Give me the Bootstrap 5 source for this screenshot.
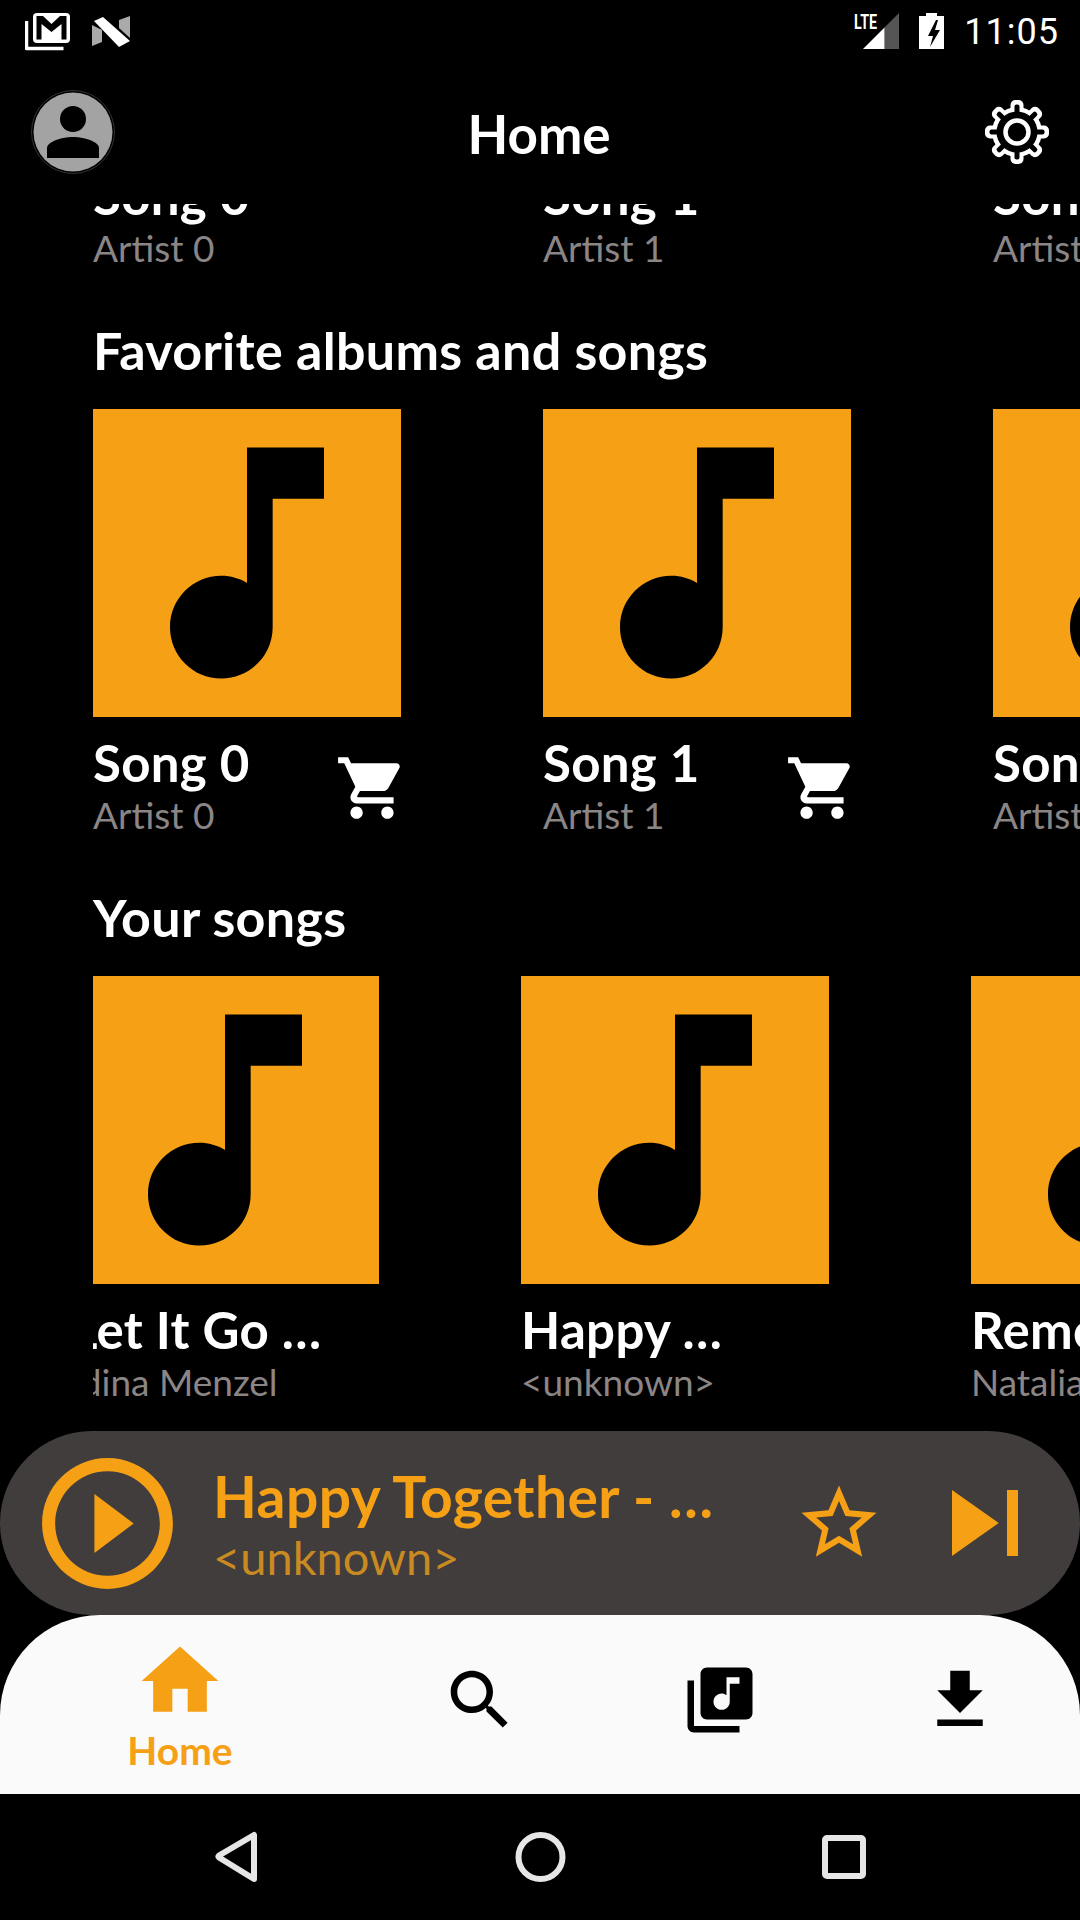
<!DOCTYPE html>
<html lang="en">
<head>
<meta charset="utf-8">
<title>Home</title>
<link rel="stylesheet" href="https://cdn.jsdelivr.net/npm/bootstrap@5.3.0/dist/css/bootstrap.min.css">
<style>
html,body{margin:0;background:#000;}
body{width:1080px;height:1920px;overflow:hidden;font-family:"Lato","Liberation Sans",sans-serif;color:#fff;}
svg{display:block;flex:none;}
.statusrow{height:60px;padding-left:25px;padding-right:21px;}
.clocktxt{font-family:"Roboto","Liberation Sans",sans-serif;font-size:36px;line-height:60px;letter-spacing:1px;margin-left:19px;padding-top:4px;}
.statgap{margin-left:19px;}
.statgap-n{margin-left:21px;}
.apphead{height:144px;}
.headside{flex:1 1 0;}
.avatarpad{margin-left:31px;}
.gearpad{margin-right:23px;}
.headtitle{font-size:53px;line-height:60px;font-weight:700;margin-top:4px;margin-right:2px;}
.scrollarea{height:1227px;}
.scrollinner{margin-top:-37px;}
.shelfclip{margin-left:93px;}
.shelfrow{gap:142px;width:2000px;}
.shelfshift{margin-left:-22px;}
.shelfitem{width:308px;flex:none;}
.sectionhead{font-size:52px;line-height:58px;font-weight:700;letter-spacing:.3px;margin:52px 0 30px 93px;}
.cover{width:308px;height:308px;background:#f6a015;}
.songmeta{margin-top:17px;width:316px;}
.songname{font-size:51px;line-height:58px;font-weight:700;letter-spacing:.3px;}
.songartist{font-size:37px;line-height:43px;margin-top:1px;color:#8b8585;}
.carticon{margin-top:17px;}
.playerbar{height:184px;background:#413d3d;padding-left:29px;padding-right:29px;}
.playertext{margin-left:27px;}
.playertitle{font-size:57px;line-height:67px;font-weight:700;letter-spacing:.4px;color:#f6a015;}
.playersub{font-size:47px;line-height:53px;margin-top:1px;color:#c98a22;}
.playerstar{margin-right:35px;}
.bottomnav{height:179px;background:#fafafa;border-radius:100px 100px 0 0;padding-left:60px;}
.navcell{width:240px;padding-top:46px;}
.navcell-home{padding-top:20px;}
.navgap{margin-left:60px;}
.navlabel{font-size:39px;line-height:46px;font-weight:700;color:#f6a015;}
.sysnav{height:126px;}
</style>
</head>
<body>
<div class="d-flex flex-column">

  <div class="statusrow d-flex align-items-center justify-content-between">
    <div class="d-flex align-items-center">
      <svg width="46" height="60" viewBox="25 0 46 60"><path d="M26.500 21v27.500h37" fill="none" stroke="#fff" stroke-width="3.500" stroke-linejoin="round"/><rect x="33" y="13" width="37" height="30" rx="4" fill="#fff"/><path d="M36.500 16H43l8.500 8 8.500-8h6.500v23.500h-5V24l-10 8-10-8v15.500h-5z" fill="#000"/></svg>
      <svg class="statgap-n" width="38" height="60" viewBox="92 0 38 60"><path d="M92 25v21l10-4V30z" fill="#aaa"/><path d="M119 20l11-4v22l-11-10z" fill="#aaa"/><path d="M94 21l9-4 27 24-11 6z" fill="#fff"/></svg>
    </div>
    <div class="d-flex align-items-center">
      <svg width="46" height="60" viewBox="855 0 46 60"><path d="M885.500 27.500L900 13v36h-14.500z" fill="#555"/><path d="M864 49l21.500-21.500V49z" fill="#fff"/><text x="855" y="29" font-family="Roboto,Liberation Sans,sans-serif" font-weight="700" font-size="20" fill="#fff" textLength="23" lengthAdjust="spacingAndGlyphs">LTE</text></svg>
      <svg class="statgap" width="26" height="60" viewBox="922 0 26 60"><path d="M929 16v-3h11v3h7v33h-25V16z" fill="#fff"/><path d="M939 20l-8 16h5l-3 11 10-17h-5l3-10z" fill="#000"/></svg>
      <span class="clocktxt">11:05</span>
    </div>
  </div>

  <div class="apphead d-flex align-items-center">
    <div class="headside d-flex">
      <svg class="avatarpad" width="84" height="84" viewBox="0 0 84 84"><circle cx="42" cy="42" r="41.500" fill="#000" stroke="#333" stroke-width="1"/><circle cx="42" cy="42" r="39.500" fill="#a3a3a3"/><circle cx="42" cy="29" r="13" fill="#000"/><path d="M16 68V58c0-6 14-11 26-11s26 5 26 11v10z" fill="#000"/></svg>
    </div>
    <div class="headtitle">Home</div>
    <div class="headside d-flex justify-content-end">
      <svg class="gearpad" width="80" height="80" viewBox="-40 -40 80 80">
        <g fill="#fff">
          <circle r="25"/>
          <rect x="-6.500" y="-32" width="13" height="14" rx="5"/>
          <rect x="-6.500" y="-32" width="13" height="14" rx="5" transform="rotate(45)"/>
          <rect x="-6.500" y="-32" width="13" height="14" rx="5" transform="rotate(90)"/>
          <rect x="-6.500" y="-32" width="13" height="14" rx="5" transform="rotate(135)"/>
          <rect x="-6.500" y="-32" width="13" height="14" rx="5" transform="rotate(180)"/>
          <rect x="-6.500" y="-32" width="13" height="14" rx="5" transform="rotate(225)"/>
          <rect x="-6.500" y="-32" width="13" height="14" rx="5" transform="rotate(270)"/>
          <rect x="-6.500" y="-32" width="13" height="14" rx="5" transform="rotate(315)"/>
        </g>
        <g fill="#000">
          <circle r="20.500"/>
          <rect x="-2.500" y="-27.500" width="5" height="12" rx="2"/>
          <rect x="-2.500" y="-27.500" width="5" height="12" rx="2" transform="rotate(45)"/>
          <rect x="-2.500" y="-27.500" width="5" height="12" rx="2" transform="rotate(90)"/>
          <rect x="-2.500" y="-27.500" width="5" height="12" rx="2" transform="rotate(135)"/>
          <rect x="-2.500" y="-27.500" width="5" height="12" rx="2" transform="rotate(180)"/>
          <rect x="-2.500" y="-27.500" width="5" height="12" rx="2" transform="rotate(225)"/>
          <rect x="-2.500" y="-27.500" width="5" height="12" rx="2" transform="rotate(270)"/>
          <rect x="-2.500" y="-27.500" width="5" height="12" rx="2" transform="rotate(315)"/>
        </g>
        <circle r="11.500" fill="none" stroke="#fff" stroke-width="4.500"/>
      </svg>
    </div>
  </div>

  <div class="scrollarea overflow-hidden">
    <div class="scrollinner">
      <div class="shelfclip overflow-hidden">
        <div class="shelfrow d-flex">
          <div class="shelfitem text-nowrap"><div class="songname">Song 0</div><div class="songartist">Artist 0</div></div>
          <div class="shelfitem text-nowrap"><div class="songname">Song 1</div><div class="songartist">Artist 1</div></div>
          <div class="shelfitem text-nowrap"><div class="songname">Song 2</div><div class="songartist">Artist 2</div></div>
        </div>
      </div>

      <div class="sectionhead">Favorite albums and songs</div>
      <div class="shelfclip overflow-hidden">
        <div class="shelfrow d-flex">
          <div class="shelfitem">
            <div class="cover"><svg width="308" height="308" viewBox="0 0 24 24"><path d="M12 3v10.550c-.59-.34-1.270-.55-2-.55-2.210 0-4 1.790-4 4s1.790 4 4 4 4-1.790 4-4V7h4V3h-6z"/></svg></div>
            <div class="songmeta d-flex justify-content-between text-nowrap">
              <div><div class="songname">Song 0</div><div class="songartist">Artist 0</div></div>
              <svg class="carticon" width="74" height="74" viewBox="0 0 24 24" fill="#fff"><path d="M7 18c-1.100 0-1.990.9-1.990 2S5.900 22 7 22s2-.9 2-2-.9-2-2-2zM1 2v2h2l3.600 7.590-1.350 2.450c-.16.28-.25.61-.25.96 0 1.100.9 2 2 2h12v-2H7.420c-.14 0-.25-.11-.25-.25l.03-.12.9-1.630h7.450c.75 0 1.410-.41 1.750-1.030l3.580-6.490c.08-.14.12-.31.12-.48 0-.55-.45-1-1-1H5.210l-.94-2H1zm16 16c-1.100 0-1.990.9-1.990 2s.89 2 1.990 2 2-.9 2-2-.9-2-2-2z"/></svg>
            </div>
          </div>
          <div class="shelfitem">
            <div class="cover"><svg width="308" height="308" viewBox="0 0 24 24"><path d="M12 3v10.550c-.59-.34-1.270-.55-2-.55-2.210 0-4 1.790-4 4s1.790 4 4 4 4-1.790 4-4V7h4V3h-6z"/></svg></div>
            <div class="songmeta d-flex justify-content-between text-nowrap">
              <div><div class="songname">Song 1</div><div class="songartist">Artist 1</div></div>
              <svg class="carticon" width="74" height="74" viewBox="0 0 24 24" fill="#fff"><path d="M7 18c-1.100 0-1.990.9-1.990 2S5.900 22 7 22s2-.9 2-2-.9-2-2-2zM1 2v2h2l3.600 7.590-1.350 2.450c-.16.28-.25.61-.25.96 0 1.100.9 2 2 2h12v-2H7.420c-.14 0-.25-.11-.25-.25l.03-.12.9-1.630h7.450c.75 0 1.410-.41 1.750-1.030l3.580-6.490c.08-.14.12-.31.12-.48 0-.55-.45-1-1-1H5.210l-.94-2H1zm16 16c-1.100 0-1.990.9-1.990 2s.89 2 1.990 2 2-.9 2-2-.9-2-2-2z"/></svg>
            </div>
          </div>
          <div class="shelfitem">
            <div class="cover"><svg width="308" height="308" viewBox="0 0 24 24"><path d="M12 3v10.550c-.59-.34-1.270-.55-2-.55-2.210 0-4 1.790-4 4s1.790 4 4 4 4-1.790 4-4V7h4V3h-6z"/></svg></div>
            <div class="songmeta text-nowrap"><div class="songname">Song 2</div><div class="songartist">Artist 2</div></div>
          </div>
        </div>
      </div>

      <div class="sectionhead">Your songs</div>
      <div class="shelfclip overflow-hidden">
        <div class="shelfrow shelfshift d-flex">
          <div class="shelfitem">
            <div class="cover"><svg width="308" height="308" viewBox="0 0 24 24"><path d="M12 3v10.550c-.59-.34-1.270-.55-2-.55-2.210 0-4 1.790-4 4s1.790 4 4 4 4-1.790 4-4V7h4V3h-6z"/></svg></div>
            <div class="songmeta text-nowrap"><div class="songname">Let It Go …</div><div class="songartist">Idina Menzel</div></div>
          </div>
          <div class="shelfitem">
            <div class="cover"><svg width="308" height="308" viewBox="0 0 24 24"><path d="M12 3v10.550c-.59-.34-1.270-.55-2-.55-2.210 0-4 1.790-4 4s1.790 4 4 4 4-1.790 4-4V7h4V3h-6z"/></svg></div>
            <div class="songmeta text-nowrap"><div class="songname">Happy …</div><div class="songartist">&lt;unknown&gt;</div></div>
          </div>
          <div class="shelfitem">
            <div class="cover"><svg width="308" height="308" viewBox="0 0 24 24"><path d="M12 3v10.550c-.59-.34-1.270-.55-2-.55-2.210 0-4 1.790-4 4s1.790 4 4 4 4-1.790 4-4V7h4V3h-6z"/></svg></div>
            <div class="songmeta text-nowrap"><div class="songname">Remember Me</div><div class="songartist">Natalia Lafourcade</div></div>
          </div>
        </div>
      </div>
    </div>
  </div>

  <div class="playerbar rounded-pill d-flex align-items-center">
    <svg width="157" height="157" viewBox="0 0 24 24" fill="#f6a015"><path d="M10 16.500l6-4.500-6-4.500v9zM12 2C6.480 2 2 6.480 2 12s4.480 10 10 10 10-4.480 10-10S17.520 2 12 2zm0 18c-4.410 0-8-3.590-8-8s3.590-8 8-8 8 3.590 8 8-3.590 8-8 8z"/></svg>
    <div class="playertext text-nowrap">
      <div class="playertitle">Happy Together - …</div>
      <div class="playersub">&lt;unknown&gt;</div>
    </div>
    <svg class="playerstar ms-auto" width="90" height="90" viewBox="0 0 24 24" fill="#f6a015"><path d="M22 9.240l-7.190-.62L12 2 9.190 8.630 2 9.240l5.460 4.730L5.820 21 12 17.270 18.180 21l-1.630-7.030L22 9.240zM12 15.400l-3.760 2.270 1-4.280-3.320-2.880 4.380-.38L12 6.100l1.710 4.040 4.380.38-3.320 2.880 1 4.280L12 15.400z"/></svg>
    <svg width="132" height="132" viewBox="0 0 24 24" fill="#f6a015"><path d="M6 18l8.500-6L6 6v12zM16 6v12h2V6h-2z"/></svg>
  </div>

  <div class="bottomnav d-flex">
    <div class="navcell navcell-home d-flex flex-column align-items-center">
      <svg width="92" height="92" viewBox="0 0 24 24" fill="#f6a015"><path d="M10 20v-6h4v6h5v-8h3L12 3 2 12h3v8z"/></svg>
      <div class="navlabel">Home</div>
    </div>
    <div class="navcell navgap d-flex flex-column align-items-center">
      <svg width="78" height="78" viewBox="0 0 24 24" fill="#000"><path d="M15.500 14h-.79l-.28-.27C15.410 12.590 16 11.110 16 9.500 16 5.910 13.090 3 9.500 3S3 5.910 3 9.500 5.910 16 9.500 16c1.610 0 3.090-.59 4.230-1.570l.27.28v.79l5 4.990L20.490 19l-4.990-5zm-6 0C7.010 14 5 11.990 5 9.500S7.010 5 9.500 5 14 7.010 14 9.500 11.990 14 9.500 14z"/></svg>
    </div>
    <div class="navcell d-flex flex-column align-items-center">
      <svg width="78" height="78" viewBox="0 0 24 24" fill="#000"><path d="M20 2H8c-1.100 0-2 .9-2 2v12c0 1.100.9 2 2 2h12c1.100 0 2-.9 2-2V4c0-1.100-.9-2-2-2zm-2 5h-3v5.500c0 1.380-1.120 2.500-2.500 2.500S10 13.880 10 12.500s1.120-2.500 2.500-2.500c.57 0 1.080.19 1.500.52V5h4v2zM4 6H2v14c0 1.100.9 2 2 2h14v-2H4V6z"/></svg>
    </div>
    <div class="navcell d-flex flex-column align-items-center">
      <svg width="78" height="78" viewBox="0 0 24 24" fill="#000"><path d="M19 9h-4V3H9v6H5l7 7 7-7zM5 18v2h14v-2H5z"/></svg>
    </div>
  </div>

  <div class="sysnav">
    <svg width="1080" height="126" viewBox="0 1794 1080 126" fill="none" stroke="#e6e6e6" stroke-width="6"><path d="M254 1835v44l-35-21.500q-1-1 0-2z" stroke-linejoin="round"/><circle cx="540.500" cy="1857" r="22"/><rect x="825" y="1838" width="38" height="38" rx="2"/></svg>
  </div>
</div>
<script src="https://cdn.jsdelivr.net/npm/bootstrap@5.3.0/dist/js/bootstrap.bundle.min.js"></script>
</body>
</html>
